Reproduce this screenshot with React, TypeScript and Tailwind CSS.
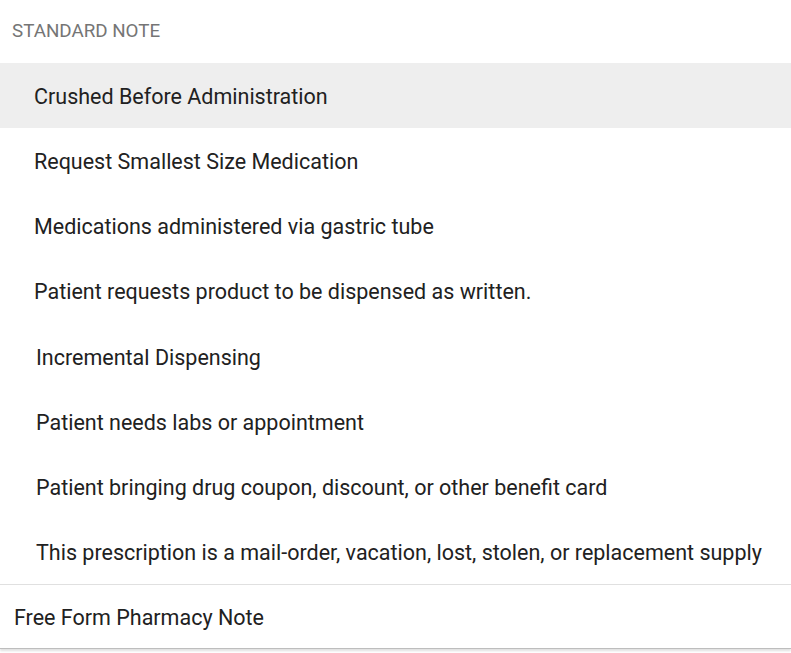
const groupOne = [
  "Crushed Before Administration",
  "Request Smallest Size Medication",
  "Medications administered via gastric tube",
  "Patient requests product to be dispensed as written.",
];

const groupTwo = [
  "Incremental Dispensing",
  "Patient needs labs or appointment",
  "Patient bringing drug coupon, discount, or other benefit card",
  "This prescription is a mail-order, vacation, lost, stolen, or replacement supply",
];

export default function App() {
  return (
    <div className="w-[791px] h-[653px] bg-white text-[#212121] font-['Roboto',sans-serif] overflow-hidden">
      <div className="shadow-[0_2px_2px_rgba(0,0,0,0.12)] border-b border-[#bdbdbd]">
        <div className="h-[63px] flex items-center pl-3 text-[18.8px] text-[#757575] uppercase">
          Standard Note
        </div>
        <ul>
          {groupOne.map((item, i) => (
            <li
              key={item}
              className={
                "h-[65px] flex items-center pl-[34px] pt-1 text-[21.5px] " +
                (i === 0 ? "bg-[#eeeeee]" : "")
              }
            >
              {item}
            </li>
          ))}
        </ul>
        <ul className="pt-px">
          {groupTwo.map((item) => (
            <li key={item} className="h-[65px] flex items-center pl-[36px] pt-1 text-[21.5px]">
              {item}
            </li>
          ))}
        </ul>
        <div className="h-[64px] flex items-center pl-[14px] pt-1 text-[21.5px] border-t border-[#e0e0e0]">
          Free Form Pharmacy Note
        </div>
      </div>
    </div>
  );
}
